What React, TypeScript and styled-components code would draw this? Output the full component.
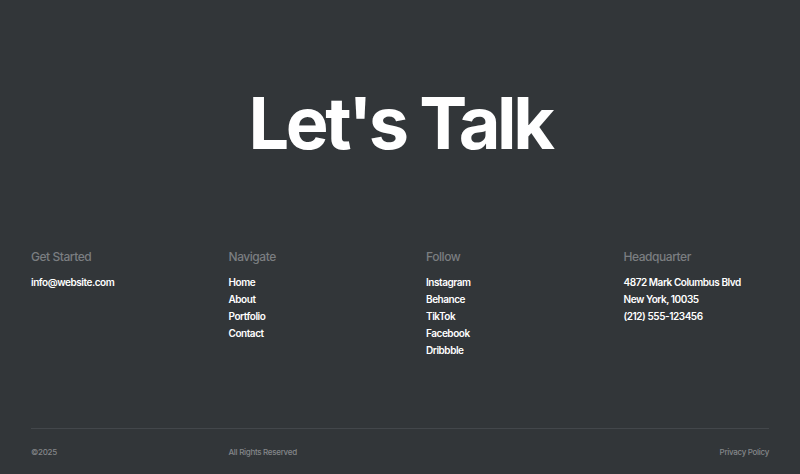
import React from "react";
import styled, { createGlobalStyle } from "styled-components";

const Global = createGlobalStyle`
  html, body { margin: 0; padding: 0; background: #323639; }
  body { font-family: Inter, "Noto Sans", sans-serif; -webkit-font-smoothing: antialiased; }
  * { box-sizing: border-box; }
`;

const Page = styled.div`
  width: 800px;
  height: 474px;
  background: #323639;
  padding: 0 31px;
  display: flex;
  flex-direction: column;
`;

const Hero = styled.h1`
  margin: 0;
  padding-top: 79px;
  height: 249px;
  text-align: center;
  color: #ffffff;
  font-size: 72px;
  font-weight: 700;
  letter-spacing: -3.4px;
  line-height: 88px;
`;

const Columns = styled.div`
  display: grid;
  grid-template-columns: repeat(4, 1fr);
  column-gap: 52px;
  height: 179px;
`;

const Column = styled.div`
  display: flex;
  flex-direction: column;
`;

const Heading = styled.h3`
  margin: 0 0 9px;
  color: #7b7e81;
  font-size: 12px;
  font-weight: 500;
  letter-spacing: -0.45px;
  line-height: 16px;
`;

const Item = styled.a`
  color: #ffffff;
  font-size: 10px;
  font-weight: 600;
  letter-spacing: -0.45px;
  line-height: 17px;
  text-decoration: none;
`;

const Bottom = styled.div`
  border-top: 1px solid #43474b;
  display: grid;
  grid-template-columns: repeat(4, 1fr);
  column-gap: 52px;
  padding-top: 17px;
`;

const Small = styled.span<{ $end?: boolean }>`
  color: #84878a;
  font-size: 8px;
  font-weight: 500;
  letter-spacing: -0.3px;
  line-height: 12px;
  text-align: ${(p) => (p.$end ? "right" : "left")};
`;

const cols = [
  { title: "Get Started", items: ["info@website.com"] },
  { title: "Navigate", items: ["Home", "About", "Portfolio", "Contact"] },
  { title: "Follow", items: ["Instagram", "Behance", "TikTok", "Facebook", "Dribbble"] },
  { title: "Headquarter", items: ["4872 Mark Columbus Blvd", "New York, 10035", "(212) 555-123456"] },
];

export default function App() {
  return (
    <>
      <Global />
      <Page>
        <Hero>Let's Talk</Hero>
        <Columns>
          {cols.map((c) => (
            <Column key={c.title}>
              <Heading>{c.title}</Heading>
              {c.items.map((i) => (
                <Item key={i} href="#">{i}</Item>
              ))}
            </Column>
          ))}
        </Columns>
        <Bottom>
          <Small>©2025</Small>
          <Small>All Rights Reserved</Small>
          <span />
          <Small $end>Privacy Policy</Small>
        </Bottom>
      </Page>
    </>
  );
}
